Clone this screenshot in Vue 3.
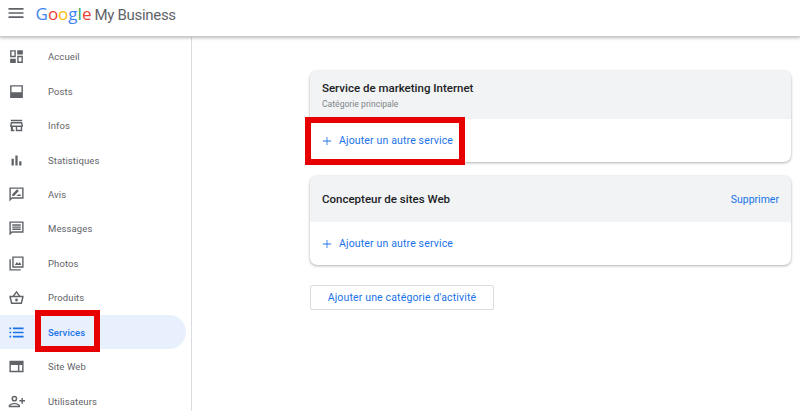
<script setup>
const navItems = [
  { label: "Accueil", icon: "M3 3h8v10H3zM5 5v6h4V5zM3 15h8v6H3zM13 11h8v10h-8zM15 13v6h4v-6zM13 3h8v6h-8z" },
  { label: "Posts", icon: "M3 3h18v18H3zM5 5v8h14V5z" },
  { label: "Infos", icon: "M4 4h16v2H4zM20 7l1 5v2h-1v6h-9v-6H7v4h2v2H4v-6H3v-2l1-5zM5.600 9l-.6 3h14l-.6-3zM13 14v4h5v-4z" },
  { label: "Statistiques", icon: "M5 9.500h3.200V19H5zM10.400 5h3.200v14h-3.200zM15.800 13H19v6h-3.200z" },
  { label: "Avis", icon: "M2 2h20v16H6l-4 4zM4 4v13.200L5.200 16H20V4zM6 14v-2.500l6.900-6.800 2.400 2.400L8.500 14zM12 14l2-2h4v2z" },
  { label: "Messages", icon: "M2 2h20v16H6l-4 4zM4 4v13.200L5.200 16H20V4zM6 6h12v2H6zM6 9h12v2H6zM6 12h12v2H6z" },
  { label: "Photos", icon: "M2 6h2v14h14v2H2zM6 2h16v16H6zM8 4v12h12V4zM9.500 14l3-4 2 2.500 2-2.500 2.500 4z" },
  { label: "Produits", icon: "M12 2.500l5.300 7H22v2l-2.300 9.500H4.300L2 11.500v-2h4.700zM9.200 9.500h5.600L12 5.700zM4.200 11.500L5.900 19h12.200l1.700-7.500zM12 13.500a2 2 0 1 1 0 4 2 2 0 0 1 0-4z" },
  { label: "Services", icon: "M7 5h15v2.400H7zM7 10.800h15v2.400H7zM7 16.600h15V19H7zM2 5h2.500v2.400H2zM2 10.800h2.500v2.400H2zM2 16.600h2.500V19H2z", active: true },
  { label: "Site Web", icon: "M2 4h20v16H2zM4 10v8h10v-8zM16 10v8h4v-8z" },
  { label: "Utilisateurs", icon: "M9 4a4 4 0 1 1 0 8 4 4 0 0 1 0-8zM9 6a2 2 0 1 0 0 4 2 2 0 0 0 0-4zM9 14c3 0 8 1.500 8 4v2H1v-2c0-2.500 5-4 8-4zM9 16c-3 0-5.500 1-6 2h12c-.5-1-3-2-6-2zM19 7h2v3h3v2h-3v3h-2v-3h-3v-2h3z" },
];

const logo = [
  { ch: "G", color: "#4285f4" },
  { ch: "o", color: "#ea4335" },
  { ch: "o", color: "#fbbc05" },
  { ch: "g", color: "#4285f4" },
  { ch: "l", color: "#34a853" },
  { ch: "e", color: "#ea4335" },
];
</script>

<template>
  <div class="page">
    <header class="topbar">
      <svg class="menu" viewBox="0 0 24 24" width="20" height="20">
        <path d="M3 18h18v-2H3zM3 13h18v-2H3zM3 6v2h18V6z" fill="#5f6368" />
      </svg>
      <div class="logo">
        <span v-for="(l, i) in logo" :key="i" :style="{ color: l.color }">{{ l.ch }}</span>
        <span class="logo-name">My Business</span>
      </div>
    </header>

    <div class="body">
      <nav class="sidebar">
        <a
          v-for="item in navItems"
          :key="item.label"
          class="nav-item"
          :class="{ active: item.active }"
        >
          <svg class="nav-icon" viewBox="0 0 24 24" width="17" height="17">
            <path :d="item.icon" fill-rule="evenodd" />
          </svg>
          <span>{{ item.label }}</span>
        </a>
        <div class="mark mark-services"></div>
      </nav>

      <main class="content">
        <section class="card">
          <div class="card-head first">
            <div>
              <h2>Service de marketing Internet</h2>
              <p>Catégorie principale</p>
            </div>
          </div>
          <div class="card-row">
            <svg viewBox="0 0 24 24" width="14" height="14">
              <path d="M19 12.700h-6.300V19h-1.400v-6.300H5v-1.400h6.300V5h1.400v6.300H19z" fill="#1a73e8" />
            </svg>
            <span>Ajouter un autre service</span>
          </div>
          <div class="mark mark-add"></div>
        </section>

        <section class="card second">
          <div class="card-head">
            <h2>Concepteur de sites Web</h2>
            <a class="remove">Supprimer</a>
          </div>
          <div class="card-row">
            <svg viewBox="0 0 24 24" width="14" height="14">
              <path d="M19 12.700h-6.300V19h-1.400v-6.300H5v-1.400h6.300V5h1.400v6.300H19z" fill="#1a73e8" />
            </svg>
            <span>Ajouter un autre service</span>
          </div>
        </section>

        <button class="add-category">Ajouter une catégorie d'activité</button>
      </main>
    </div>
  </div>
</template>

<style scoped>
.page {
  width: 800px;
  height: 411px;
  overflow: hidden;
  display: flex;
  flex-direction: column;
  background: #fff;
  font-family: Roboto, "Liberation Sans", sans-serif;
}

.topbar {
  height: 37px;
  flex: none;
  display: flex;
  align-items: center;
  padding-left: 6px;
  box-sizing: border-box;
  border-bottom: 1px solid #c8c9ca;
  box-shadow: 0 1px 3px rgba(60, 64, 67, 0.35);
  position: relative;
  z-index: 2;
}

.menu {
  margin-top: -11px;
}

.logo {
  margin-left: 9.500px;
  margin-top: -9px;
  font-family: "Open Sans", sans-serif;
  font-size: 17px;
  white-space: nowrap;
}

.logo-name {
  font-family: Roboto, sans-serif;
  font-size: 15px;
  letter-spacing: -0.3px;
  color: #5f6368;
  margin-left: 3px;
}

.body {
  flex: 1;
  display: flex;
  min-height: 0;
}

.sidebar {
  width: 192px;
  flex: none;
  box-sizing: border-box;
  border-right: 1px solid #dadce0;
  padding: 2.500px 5px 0 0;
  position: relative;
}

.nav-item {
  height: 34.450px;
  display: flex;
  align-items: center;
  padding-left: 8px;
  font-size: 9.500px;
  color: #5f6368;
  border-radius: 0 18px 18px 0;
  letter-spacing: 0.1px;
}

.nav-icon {
  fill: #5f6368;
  margin-right: 23px;
  flex: none;
}

.nav-item.active {
  background: #e8f0fe;
  color: #1a73e8;
  font-weight: 500;
}

.nav-item.active .nav-icon {
  fill: #1a73e8;
}

.mark {
  position: absolute;
  border: 6px solid #e60000;
  box-sizing: border-box;
  pointer-events: none;
}

.mark-services {
  left: 35px;
  top: 273px;
  width: 65px;
  height: 42px;
}

.content {
  flex: 1;
  padding: 34px 9px 0 118px;
  min-width: 0;
}

.card {
  border-radius: 7px;
  background: #fff;
  box-shadow: 0 1px 3px rgba(60, 64, 67, 0.4), 0 0 1px rgba(60, 64, 67, 0.2);
  position: relative;
}

.second {
  margin-top: 14px;
}

.card-head {
  height: 46px;
  display: flex;
  align-items: center;
  justify-content: space-between;
  padding: 0 12px;
  background: #f1f3f4;
  border-radius: 7px 7px 0 0;
}

.card-head.first {
  height: 48px;
}

h2 {
  margin: 0;
  font-size: 11.500px;
  font-weight: 500;
  color: #202124;
}

p {
  margin: 4px 0 0;
  font-size: 8.600px;
  color: #80868b;
}

.remove {
  font-size: 10.500px;
  color: #1a73e8;
}

.card-row {
  height: 43px;
  display: flex;
  align-items: center;
  padding-left: 10px;
  gap: 5px;
  font-size: 10.500px;
  color: #1a73e8;
  letter-spacing: 0.15px;
}

.mark-add {
  left: -5px;
  top: 46px;
  width: 160px;
  height: 48px;
}

.add-category {
  display: block;
  margin-top: 20px;
  width: 184px;
  height: 25px;
  padding: 0;
  background: #fff;
  border: 1px solid #dadce0;
  border-radius: 2px;
  font-family: inherit;
  font-size: 10.500px;
  color: #1a73e8;
  letter-spacing: 0.15px;
}
</style>
